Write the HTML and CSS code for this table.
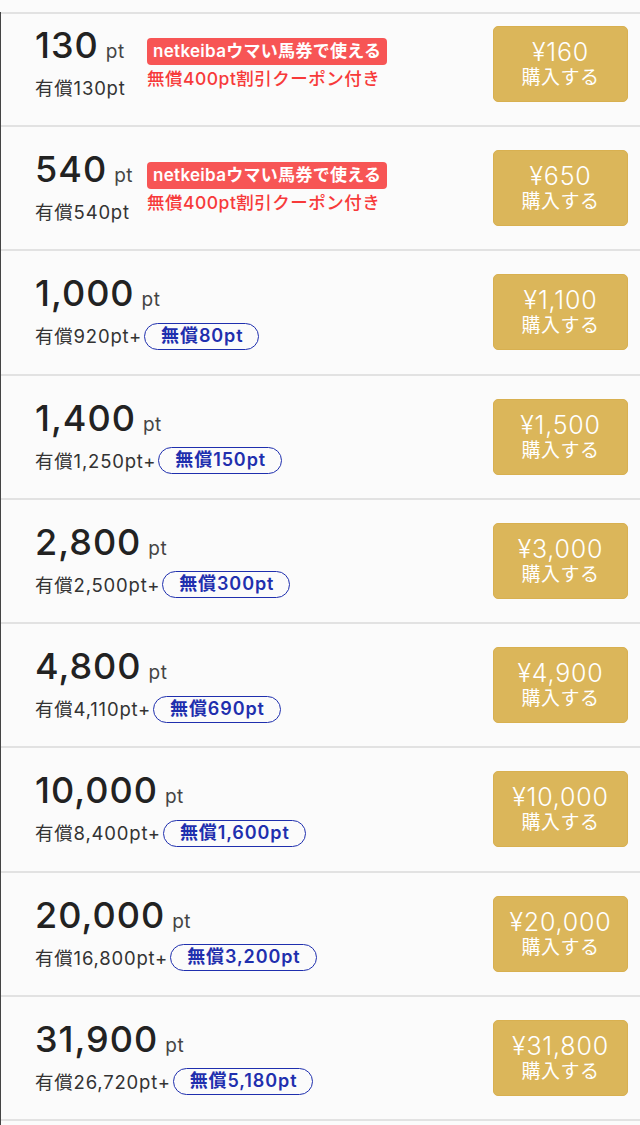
FILE: index.html
```html
<!DOCTYPE html>
<html lang="ja">
<head>
<meta charset="utf-8">
<link rel="stylesheet" href="styles.css">
</head>
<body>
<div class="top"></div>
<ul class="list">
  <li class="row first">
    <div class="info coupon">
      <div class="main">
        <div class="amount"><span class="num">130</span><span class="unit">pt</span></div>
        <div class="paid">有償130pt</div>
      </div>
      <div class="extra">
        <span class="badge">netkeibaウマい馬券で使える</span>
        <span class="coupon-text">無償400pt割引クーポン付き</span>
      </div>
    </div>
    <button class="buy"><span class="price">¥160</span><span class="label">購入する</span></button>
  </li>
  <li class="row">
    <div class="info coupon">
      <div class="main">
        <div class="amount"><span class="num">540</span><span class="unit">pt</span></div>
        <div class="paid">有償540pt</div>
      </div>
      <div class="extra">
        <span class="badge">netkeibaウマい馬券で使える</span>
        <span class="coupon-text">無償400pt割引クーポン付き</span>
      </div>
    </div>
    <button class="buy"><span class="price">¥650</span><span class="label">購入する</span></button>
  </li>
  <li class="row">
    <div class="info">
      <div class="amount"><span class="num">1,000</span><span class="unit">pt</span></div>
      <div class="paid">有償920pt+<span class="free">無償80pt</span></div>
    </div>
    <button class="buy"><span class="price">¥1,100</span><span class="label">購入する</span></button>
  </li>
  <li class="row">
    <div class="info">
      <div class="amount"><span class="num">1,400</span><span class="unit">pt</span></div>
      <div class="paid">有償1,250pt+<span class="free">無償150pt</span></div>
    </div>
    <button class="buy"><span class="price">¥1,500</span><span class="label">購入する</span></button>
  </li>
  <li class="row">
    <div class="info">
      <div class="amount"><span class="num">2,800</span><span class="unit">pt</span></div>
      <div class="paid">有償2,500pt+<span class="free">無償300pt</span></div>
    </div>
    <button class="buy"><span class="price">¥3,000</span><span class="label">購入する</span></button>
  </li>
  <li class="row">
    <div class="info">
      <div class="amount"><span class="num">4,800</span><span class="unit">pt</span></div>
      <div class="paid">有償4,110pt+<span class="free">無償690pt</span></div>
    </div>
    <button class="buy"><span class="price">¥4,900</span><span class="label">購入する</span></button>
  </li>
  <li class="row">
    <div class="info">
      <div class="amount"><span class="num">10,000</span><span class="unit">pt</span></div>
      <div class="paid">有償8,400pt+<span class="free">無償1,600pt</span></div>
    </div>
    <button class="buy"><span class="price">¥10,000</span><span class="label">購入する</span></button>
  </li>
  <li class="row">
    <div class="info">
      <div class="amount"><span class="num">20,000</span><span class="unit">pt</span></div>
      <div class="paid">有償16,800pt+<span class="free">無償3,200pt</span></div>
    </div>
    <button class="buy"><span class="price">¥20,000</span><span class="label">購入する</span></button>
  </li>
  <li class="row">
    <div class="info">
      <div class="amount"><span class="num">31,900</span><span class="unit">pt</span></div>
      <div class="paid">有償26,720pt+<span class="free">無償5,180pt</span></div>
    </div>
    <button class="buy"><span class="price">¥31,800</span><span class="label">購入する</span></button>
  </li>
  <li class="row last"></li>
</ul>
</body>
</html>
```
FILE: styles.css
```css
html, body {
  margin: 0;
  padding: 0;
  background: #fbfbfb;
}
body {
  font-family: Inter, "Noto Sans CJK JP", sans-serif;
  color: #333;
  width: 640px;
  height: 1125px;
  overflow: hidden;
}
.top {
  height: 12px;
}
.list {
  list-style: none;
  margin: 0;
  padding: 0;
  border-left: 1px solid #444;
}
.row {
  display: flex;
  justify-content: space-between;
  align-items: flex-start;
  box-sizing: border-box;
  height: 124.25px;
  border-top: 2px solid #e2e2e2;
  padding: 23px 12px 0 34px;
}
.row.first {
  height: 113px;
  padding-top: 12px;
}
.info {
  display: flex;
  flex-direction: column;
}
.info.coupon {
  flex-direction: row;
}
.main {
  display: flex;
  flex-direction: column;
  width: 112px;
}
.amount {
  display: flex;
  align-items: baseline;
  gap: 7px;
  line-height: 38px;
  height: 38px;
}
.num {
  font-size: 36px;
  font-weight: 500;
  color: #222;
  letter-spacing: 1px;
}
.unit {
  font-size: 19px;
  color: #444;
  letter-spacing: 0.5px;
}
.paid {
  display: flex;
  align-items: center;
  font-size: 18.5px;
  letter-spacing: 0.8px;
  line-height: 28px;
  margin-top: 10px;
  color: #333;
  white-space: nowrap;
}
.free {
  display: inline-block;
  box-sizing: border-box;
  height: 27px;
  border: 1.5px solid #1f2fae;
  border-radius: 14px;
  color: #1f2fae;
  font-weight: 600;
  font-size: 18px;
  letter-spacing: 0.9px;
  line-height: 24px;
  padding: 0 15px 0 16px;
  margin-left: 2px;
}
.extra {
  display: flex;
  flex-direction: column;
  align-items: flex-start;
  padding-top: 12px;
}
.badge {
  background: #f75555;
  color: #fff;
  font-weight: 600;
  font-size: 17px;
  letter-spacing: 0.3px;
  line-height: 27px;
  padding: 0 6px;
  border-radius: 4px;
}
.coupon-text {
  color: #f73a3a;
  font-size: 17.5px;
  letter-spacing: 0.5px;
  line-height: 28px;
  font-weight: 500;
}
.buy {
  width: 135px;
  height: 76px;
  background: #dbb65a;
  border: 1px solid #d8b050;
  border-radius: 5px;
  color: #fff;
  font-family: inherit;
  display: flex;
  flex-direction: column;
  align-items: center;
  justify-content: center;
  padding: 0;
}
.price {
  font-size: 25px;
  font-weight: 300;
  letter-spacing: 0.8px;
  line-height: 28px;
}
.label {
  font-size: 19px;
  line-height: 24px;
  letter-spacing: 0.5px;
}
```
